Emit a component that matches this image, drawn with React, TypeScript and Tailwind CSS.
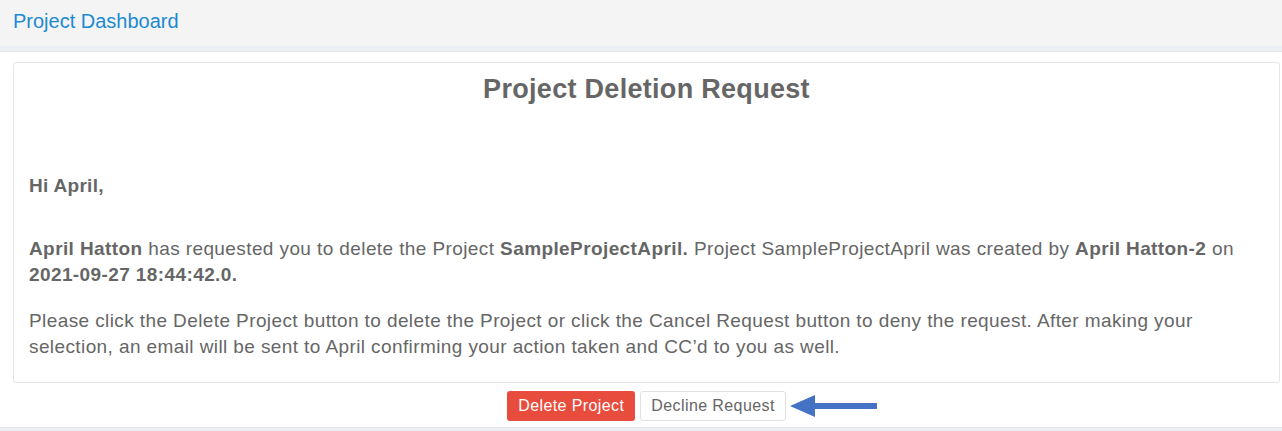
import React from "react";

export default function App() {
  const arial = { fontFamily: '"Liberation Sans", Arial, sans-serif' } as React.CSSProperties;
  return (
    <div className="w-[1282px] h-[431px] bg-white overflow-hidden flex flex-col" style={arial}>
      <div className="h-[46px] bg-[#f4f4f5] flex items-center pl-[13px] pb-[4px]">
        <span className="text-[20px] text-[#1c8ad1]">Project Dashboard</span>
      </div>
      <div className="h-[6px] bg-[#eceff4] border-b border-[#e2e5ea]"></div>
      <div className="pt-[10px] pl-[13px] pr-[2px]">
        <div className="border border-[#e6e6e6] rounded-[3px] h-[321px] px-[15px] text-[#666]">
          <h1 className="text-center text-[27px] font-bold pt-[10px] leading-[32px] text-[#666] tracking-[0.3px]">
            Project Deletion Request
          </h1>
          <p className="mt-[68px] text-[19px] font-bold leading-[26px] tracking-[0.3px]">Hi April,</p>
          <p className="mt-[37px] text-[19px] leading-[26px] tracking-[0.4px]">
            <b>April Hatton</b> has requested you to delete the Project{" "}
            <b>SampleProjectApril.</b> Project SampleProjectApril was created by{" "}
            <b>April Hatton-2</b> on <b>2021-09-27 18:44:42.0.</b>
          </p>
          <p className="mt-[20px] text-[19px] leading-[26px] tracking-[0.4px]">
            Please click the Delete Project button to delete the Project or click the Cancel Request button to deny the request. After making your selection, an email will be sent to April confirming your action taken and CC’d to you as well.
          </p>
        </div>
      </div>
      <div className="flex items-center justify-center mt-[8px] pl-[105px]">
        <button className="h-[30px] px-[11px] bg-[#e74c3c] text-white text-[16px] rounded-[3px] tracking-[0.4px]">
          Delete Project
        </button>
        <button className="ml-[5px] h-[30px] px-[10px] bg-white text-[#666] text-[16px] rounded-[3px] border border-[#e0e0e0] tracking-[0.4px]">
          Decline Request
        </button>
        <svg width="90" height="26" viewBox="0 0 90 26" className="ml-[4px]">
          <polygon points="0,13 25,2 25,10 87,10 87,16 25,16 25,24" fill="#4472c4" />
        </svg>
      </div>
      <div className="mt-auto h-[4px] bg-[#eceff4] border-t border-[#e2e5ea]"></div>
    </div>
  );
}
